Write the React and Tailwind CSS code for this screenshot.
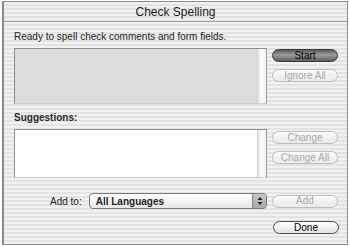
import React from 'react';

// Mac OS X "Check Spelling" sheet, greyscale scan
const stripes =
  'bg-[image:repeating-linear-gradient(180deg,#f1f1f1_0px,#f1f1f1_2px,#e3e3e3_2px,#e3e3e3_4px)]';

const AquaButton = ({ children, variant = 'disabled' }) => {
  const styles = {
    default:
      'border-[#3a3a3a] text-black bg-[image:linear-gradient(180deg,#5a5a5a_0%,#9c9c9c_45%,#8a8a8a_60%,#5e5e5e_100%)]',
    normal:
      'border-[#4a4a4a] text-black bg-[image:linear-gradient(180deg,#ffffff_0%,#f2f2f2_50%,#e2e2e2_100%)]',
    disabled:
      'border-[#bdbdbd] text-[#a9a9a9] bg-[image:linear-gradient(180deg,#fbfbfb_0%,#f1f1f1_50%,#ebebeb_100%)]',
  };
  return (
    <button
      className={`w-[66px] h-[13px] rounded-full border flex items-center justify-center text-[10px] leading-none ${styles[variant]}`}
    >
      {children}
    </button>
  );
};

const ListBox = ({ fill, height }) => (
  <div
    className={`flex w-[253px] border-t border-l border-[#8e8e8e] border-r border-r-[#9a9a9a] border-b border-b-[#cfcfcf] ${height}`}
  >
    <div className={`flex-1 ${fill}`} />
    <div className="w-[9px] bg-[image:linear-gradient(90deg,#e4e4e4_0%,#fbfbfb_40%,#f3f3f3_100%)] border-l border-[#d2d2d2]" />
  </div>
);

export default function App() {
  return (
    <div
      className="w-[350px] h-[246px] bg-white pt-[1px] pl-[2px]"
      style={{ fontFamily: '"Liberation Sans", Arial, sans-serif' }}
    >
      <div
        className={`w-[346px] h-[244px] border-l-2 border-r border-b border-t border-[#8a8a8a] flex flex-col ${stripes}`}
      >
        {/* title bar */}
        <div className="h-[20px] flex items-center justify-center border-b border-[#9c9c9c] text-[12px] text-[#1a1a1a]">
          Check Spelling
        </div>

        <div className="pl-[10px] pr-[8px] flex flex-col">
          <div className="mt-[9px] h-[12px] text-[10px] leading-[12px] text-[#1c1c1c]">
            Ready to spell check comments and form fields.
          </div>

          <div className="mt-[5px] flex gap-[5px]">
            <ListBox fill="bg-[#dcdcdc]" height="h-[56px]" />
            <div className="mt-[1px] flex flex-col gap-[7px]">
              <AquaButton variant="default">Start</AquaButton>
              <AquaButton>Ignore All</AquaButton>
            </div>
          </div>

          <div className="mt-[8px] h-[12px] text-[10px] leading-[12px] font-bold text-[#2a2a2a]">
            Suggestions:
          </div>

          <div className="mt-[5px] flex gap-[5px]">
            <ListBox fill="bg-white" height="h-[49px]" />
            <div className="mt-[2px] flex flex-col gap-[7px]">
              <AquaButton>Change</AquaButton>
              <AquaButton>Change All</AquaButton>
            </div>
          </div>

          <div className="mt-[15px] flex items-center gap-[5px]">
            <div className="flex items-center w-[253px]">
              <span className="ml-[36px] text-[10px] text-[#1c1c1c]">Add to:</span>
              <div className="ml-[7px] flex-1 h-[16px] rounded-[4px] border border-[#7a7a7a] flex items-center overflow-hidden bg-[image:linear-gradient(180deg,#ffffff_0%,#f4f4f4_50%,#e6e6e6_100%)]">
                <span className="flex-1 pl-[6px] text-[10px] font-bold text-[#222]">All Languages</span>
                <div className="w-[14px] h-full border-l border-[#8a8a8a] bg-[image:linear-gradient(180deg,#c8c8c8_0%,#a8a8a8_100%)] flex items-center justify-center">
                  <svg width="6" height="10" viewBox="0 0 6 10">
                    <path d="M3 1 L5.5 4 L0.5 4 Z" fill="#222" />
                    <path d="M3 9 L5.5 6 L0.5 6 Z" fill="#222" />
                  </svg>
                </div>
              </div>
            </div>
            <AquaButton>Add</AquaButton>
          </div>

          <div className="mt-[12px] flex justify-end pr-[0px]">
            <AquaButton variant="normal">Done</AquaButton>
          </div>
        </div>
      </div>
    </div>
  );
}
